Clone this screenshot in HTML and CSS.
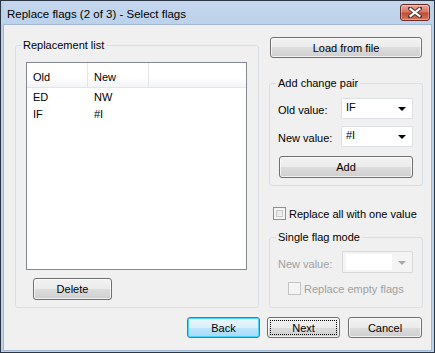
FILE: index.html
```html
<!DOCTYPE html>
<html lang="en">
<head>
    <meta charset="UTF-8">
    <title>Replace flags (2 of 3) - Select flags</title>
    <link rel="stylesheet" href="styles.css">
</head>
<body>
    <div class="window">
        <div class="titlebar">
            <span class="title">Replace flags (2 of 3) - Select flags</span>
            <span class="close-btn">
                <svg width="14" height="11" viewBox="0 0 14 11">
                    <path d="M2 1.5 L12 9.5 M12 1.5 L2 9.5" stroke="#4b3431" stroke-width="4" stroke-linecap="square"/>
                    <path d="M2.5 2 L11.5 9 M11.5 2 L2.5 9" stroke="#fff" stroke-width="2.2" stroke-linecap="square"/>
                </svg>
            </span>
        </div>
        <div class="client">
            <div class="panes">
                <fieldset class="group list-group">
                    <legend>Replacement list</legend>
                    <div class="listview">
                        <div class="lv-header">
                            <span class="col c-old">Old</span>
                            <span class="col c-new">New</span>
                            <span class="col c-rest"></span>
                        </div>
                        <div class="lv-row"><span class="c-old">ED</span><span class="c-new">NW</span></div>
                        <div class="lv-row"><span class="c-old">IF</span><span class="c-new">#I</span></div>
                    </div>
                    <button class="btn delete-btn">Delete</button>
                </fieldset>

                <div class="side">
                    <button class="btn load-btn">Load from file</button>

                    <fieldset class="group pair-group">
                        <legend>Add change pair</legend>
                        <div class="field-row">
                            <span class="field-label">Old value:</span>
                            <span class="combo"><span class="combo-text">IF</span><span class="arrow"></span></span>
                        </div>
                        <div class="field-row second">
                            <span class="field-label">New value:</span>
                            <span class="combo"><span class="combo-text">#I</span><span class="arrow"></span></span>
                        </div>
                        <button class="btn add-btn">Add</button>
                    </fieldset>

                    <label class="check-row">
                        <span class="checkbox"></span>
                        <span>Replace all with one value</span>
                    </label>

                    <fieldset class="group single-group">
                        <legend>Single flag mode</legend>
                        <div class="field-row disabled">
                            <span class="field-label">New value:</span>
                            <span class="combo combo-off"><span class="combo-text"><span class="combo-fill"></span></span><span class="arrow"></span></span>
                        </div>
                        <label class="check-row inner disabled">
                            <span class="checkbox"></span>
                            <span>Replace empty flags</span>
                        </label>
                    </fieldset>
                </div>
            </div>

            <div class="actions">
                <button class="btn btn-default back-btn">Back</button>
                <button class="btn next-btn"><span class="focus">Next</span></button>
                <button class="btn cancel-btn">Cancel</button>
            </div>
        </div>
    </div>
</body>
</html>
```

FILE: styles.css
```css
*{
    margin:0;
    padding:0;
    box-sizing:border-box;
}
body{
    width:435px;
    height:353px;
    background:#fff;
    font-family:"Liberation Sans", Arial, sans-serif;
    font-size:11px;
    color:#000;
}
.window{
    width:435px;
    height:353px;
    border:1px solid #2b3644;
    background:#bcd2ea;
    padding:0 3px 2px 3px;
    display:flex;
    flex-direction:column;
}
.titlebar{
    height:24px;
    display:flex;
    align-items:center;
    justify-content:space-between;
    padding:1px 1px 0 3px;
    background:linear-gradient(#c4d7ee, #bcd2ea);
}
.title{
    font-size:11.5px;
    color:#000;
}
.close-btn{
    width:30px;
    height:17px;
    margin-top:-2px;
    border:1px solid #6b2a22;
    border-radius:3px;
    background:linear-gradient(#e9a99c, #d77462 45%, #c14b33 55%, #d1795f);
    box-shadow:inset 0 0 0 1px rgba(255,255,255,.35);
    display:flex;
    align-items:center;
    justify-content:center;
}
.client{
    flex:1;
    background:#f0f0f0;
    box-shadow:0 0 0 1px #a3b9d3;
    padding:12px 8px 12px 11px;
    display:flex;
    flex-direction:column;
}
.panes{
    display:flex;
    gap:10px;
    height:271px;
}
.group{
    border:1px solid #d5dfe5;
    border-radius:3px;
    min-width:0;
}
.group legend{
    line-height:14px;
    padding:0 2px;
    margin-left:5px;
}
.list-group{
    width:244px;
    margin-top:1px;
    padding:0 0 7px 0;
}
.listview{
    margin:10px 0 0 10px;
    width:221px;
    height:208px;
    border:1px solid #828790;
    background:#fff;
}
.lv-header{
    display:flex;
    height:25px;
    border-bottom:1px solid #e5e5e5;
    background:linear-gradient(#fff 60%, #f3f4f6);
}
.lv-header .col{
    line-height:22px;
    padding:3px 0 0 6px;
    border-right:1px solid #e3e5e8;
}
.lv-header .c-rest{
    flex:1;
    border-right:none;
}
.c-old{
    width:61px;
}
.c-new{
    width:61px;
}
.lv-row{
    display:flex;
    height:17px;
    line-height:17px;
}
.lv-header + .lv-row{
    margin-top:1px;
}
.lv-row span{
    padding-left:6px;
}
.btn{
    font-family:inherit;
    font-size:11px;
    color:#000;
    border:1px solid #707070;
    border-radius:3px;
    background:linear-gradient(#f2f2f2, #ebebeb 50%, #dddddd 50%, #cfcfcf);
    box-shadow:inset 0 0 0 1px rgba(255,255,255,.7);
    display:flex;
    align-items:center;
    justify-content:center;
}
.delete-btn{
    margin:8px 0 0 17px;
    width:79px;
    height:22px;
}
.side{
    width:154px;
    display:flex;
    flex-direction:column;
}
.load-btn{
    margin:0 1px;
    height:21px;
}
.pair-group{
    margin-top:18px;
    padding:0 0 7px 0;
}
.pair-group legend,
.single-group legend{
    margin-left:6px;
}
.field-row{
    display:flex;
    align-items:center;
    padding-left:8px;
    margin-top:8px;
}
.field-row.second{
    margin-top:7px;
}
.field-label{
    width:63px;
    padding-top:3px;
}
.combo{
    width:72px;
    height:21px;
    border:1px solid #dcdfe3;
    border-radius:1px;
    background:#fff;
    display:flex;
    align-items:center;
    justify-content:space-between;
    padding:0 6px 0 4px;
}
.combo-text{
    margin-top:-3px;
}
.arrow{
    width:0;
    height:0;
    border-left:4px solid transparent;
    border-right:4px solid transparent;
    border-top:4px solid #000;
    margin-top:1px;
}
.add-btn{
    margin:9px 0 0 9px;
    width:134px;
    height:22px;
}
.check-row{
    display:flex;
    align-items:center;
    gap:3px;
    margin:21px 0 0 4px;
    height:13px;
}
.checkbox{
    width:13px;
    height:13px;
    border:1px solid #8e8f8f;
    background:linear-gradient(135deg, #dcdcdc, #fbfbfb);
    box-shadow:inset 0 0 0 2px #f4f4f4, inset 0 0 0 3px #c9c9c9;
}
.single-group{
    margin-top:10px;
    padding:0 0 12px 0;
}
.single-group .field-row{
    margin-top:7px;
}
.single-group .combo{
    width:71px;
    height:22px;
    margin-left:1px;
    padding:0 6px 0 3px;
}
.disabled{
    color:#a0a0a0;
}
.combo-off{
    border-color:#d9d9d9;
    background:#f4f4f4;
}
.combo-off .combo-text{
    margin-top:0;
}
.combo-fill{
    display:block;
    width:46px;
    height:16px;
    background:#fff;
}
.combo-off .arrow{
    border-top-color:#a8a8a8;
}
.check-row.inner{
    margin:9px 0 0 18px;
}
.check-row.inner .checkbox{
    border-color:#c4c4c4;
    background:#f4f4f4;
    box-shadow:none;
}
.actions{
    display:flex;
    justify-content:flex-end;
    margin-top:9px;
    padding-right:1px;
}
.actions .btn{
    height:21px;
}
.back-btn{
    width:73px;
}
.next-btn{
    width:73px;
    margin-left:7px;
    padding:2px;
}
.cancel-btn{
    width:74px;
    margin-left:8px;
}
.btn-default{
    border-color:#3c7fb1;
    background:linear-gradient(#eaf6fd, #d9f0fc 50%, #bee6fd 50%, #a7d9f5);
    box-shadow:inset 0 0 0 1px #48d4fb;
}
.focus{
    width:100%;
    height:100%;
    border:1px dotted #000;
    display:flex;
    align-items:center;
    justify-content:center;
}
```
